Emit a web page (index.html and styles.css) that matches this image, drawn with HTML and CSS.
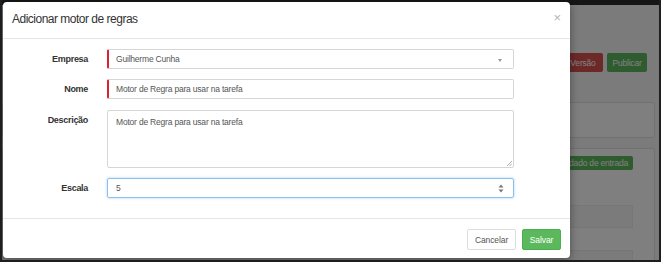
FILE: index.html
```html
<!DOCTYPE html>
<html lang="pt-BR">
<head>
    <meta charset="UTF-8">
    <meta name="viewport" content="width=device-width, initial-scale=1.0">
    <title>Adicionar motor de regras</title>
    <link rel="stylesheet" href="styles.css">
</head>
<body>
    <div class="frame">
        <!-- page behind the overlay -->
        <div class="page">
            <div class="navbar"></div>
            <div class="toolbar">
                <span class="bg-btn bg-red">Versão</span>
                <span class="bg-btn bg-green">Publicar</span>
            </div>
            <div class="panel panel-top"></div>
            <div class="panel panel-main">
                <div class="panel-actions"><span class="bg-btn bg-green small">Adicionar dado de entrada</span></div>
                <div class="panel-row"></div>
                <div class="panel-row last"></div>
            </div>
        </div>

        <div class="overlay"></div>

        <div class="modal">
            <div class="modal-header">
                <h4 class="modal-title">Adicionar motor de regras</h4>
                <span class="close">×</span>
            </div>
            <div class="modal-body">
                <div class="form-row">
                    <label class="form-label">Empresa</label>
                    <div class="form-control required select">
                        <span>Guilherme Cunha</span>
                        <span class="caret"></span>
                    </div>
                </div>
                <div class="form-row">
                    <label class="form-label">Nome</label>
                    <div class="form-control required"><span>Motor de Regra para usar na tarefa</span></div>
                </div>
                <div class="form-row">
                    <label class="form-label top">Descrição</label>
                    <div class="form-control textarea">
                        <span>Motor de Regra para usar na tarefa</span>
                        <svg class="grip" width="6" height="6" viewBox="0 0 6 6"><path d="M1 6 L6 1 M3.5 6 L6 3.5" stroke="#999" stroke-width="0.8"/></svg>
                    </div>
                </div>
                <div class="form-row">
                    <label class="form-label">Escala</label>
                    <div class="form-control focus">
                        <span>5</span>
                        <svg class="spin" width="6" height="9" viewBox="0 0 6 9"><path d="M3 0.5 L5.5 3.5 L0.5 3.5 Z M3 8.5 L5.5 5.5 L0.5 5.5 Z" fill="#777"/></svg>
                    </div>
                </div>
            </div>
            <div class="modal-footer">
                <button class="btn btn-default">Cancelar</button>
                <button class="btn btn-success">Salvar</button>
            </div>
        </div>
    </div>
</body>
</html>
```

FILE: styles.css
```css
* { box-sizing: border-box; }
body { margin: 0; font-family: "Liberation Sans", Arial, sans-serif; background: #fff; }

.frame { position: relative; width: 661px; height: 262px; overflow: hidden; background: #f7f7f7; border: 2px solid #1e1e1e; border-top: none; }

/* background page */
.page { height: 100%; display: flex; flex-direction: column; }
.page > * { flex-shrink: 0; }
.navbar { height: 16px; margin-top: -11px; background: #2c2c2c; }
.toolbar { display: flex; justify-content: flex-end; gap: 4px; margin: 48px 12px 0 0; }
.bg-btn { color: #fff; font-size: 8.5px; letter-spacing: -0.2px; height: 19px; width: 40px; display: flex; align-items: center; justify-content: center; border-radius: 2px; }
.bg-red { background: #d9534f; }
.bg-green { background: #5cb85c; }
.bg-btn.small { font-size: 8.5px; height: 14px; width: auto; padding: 0 5px; }
.panel { border: 1px solid #e2e2e2; border-radius: 3px; background: #fff; margin-right: 4px; }
.panel-top { height: 36px; margin-top: 30px; }
.panel-main { margin-top: 10px; height: 140px; padding: 7px 21px 0 0; }
.panel-actions { display: flex; justify-content: flex-end; }
.panel-row { height: 23px; margin-top: 35px; border: 1px solid #ececec; background: #f7f7f7; }
.panel-row.last { margin-top: 22px; }

.overlay { position: absolute; inset: 0; background: rgba(0, 0, 0, 0.5); }

/* modal */
.modal { position: absolute; left: 1px; top: 2px; width: 567px; height: 256px; background: #fff; border-radius: 4px; box-shadow: 0 2px 8px rgba(0, 0, 0, 0.4); }
.modal-header { height: 37px; border-bottom: 1px solid #e5e5e5; display: flex; align-items: center; justify-content: space-between; padding: 0 9px 2px 9px; }
.modal-title { margin: 0; font-size: 12px; letter-spacing: -0.5px; font-weight: normal; color: #333; }
.close { color: #b5b5b5; font-size: 13px; margin-top: -3px; }

.modal-body { padding: 10px 0 20px 0; display: flex; flex-direction: column; gap: 10px; }
.form-row { display: flex; align-items: center; }
.form-label { width: 85px; text-align: right; font-size: 9px; letter-spacing: -0.3px; font-weight: bold; color: #333; margin-right: 19px; }
.form-label.top { align-self: flex-start; padding-top: 6px; }
.form-control { position: relative; width: 407px; height: 20px; border: 1px solid #d6d6d6; border-radius: 2px; display: flex; align-items: center; padding-left: 8px; font-size: 8.5px; letter-spacing: -0.2px; color: #555; }
.form-control.required { border-left: 2px solid #d9232e; padding-left: 7px; }
.caret { position: absolute; right: 11px; top: 9px; border-left: 2.5px solid transparent; border-right: 2.5px solid transparent; border-top: 3px solid #999; }
.form-control.textarea { height: 58px; align-items: flex-start; padding-top: 6px; margin-top: 1px; }
.grip { position: absolute; right: 1px; bottom: 1px; }
.form-control.focus { border-color: #8cc0ea; box-shadow: 0 0 3px rgba(102, 175, 233, 0.5); }
.spin { position: absolute; right: 9px; top: 5px; }

.modal-footer { border-top: 1px solid #e5e5e5; padding: 10px 9px 0 0; display: flex; justify-content: flex-end; gap: 6px; }
.btn { font-family: "Liberation Sans", Arial, sans-serif; font-size: 8.5px; letter-spacing: -0.1px; height: 21px; padding: 0; border-radius: 2px; border: 1px solid transparent; }
.btn-default { background: #fff; border-color: #ddd; color: #555; width: 49px; }
.btn-success { background: #5cb85c; border-color: #4cae4c; color: #fff; width: 39px; }
```
